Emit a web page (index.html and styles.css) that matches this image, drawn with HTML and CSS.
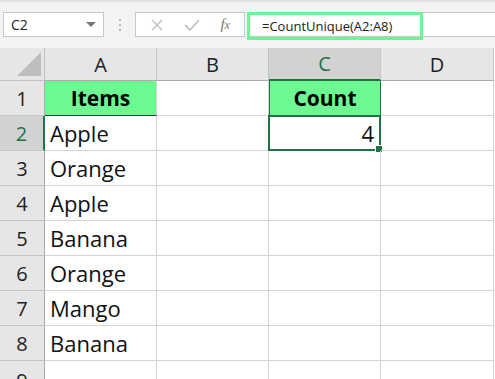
FILE: index.html
```html
<!DOCTYPE html>
<html lang="en">

<head>
    <meta charset="UTF-8">
    <title>CountUnique</title>
    <link rel="stylesheet" href="styles.css">
</head>

<body>
    <div class="toolbar">
        <div class="name-box">
            <span>C2</span>
            <svg class="caret" width="10" height="6" viewBox="0 0 10 6"><path d="M0 0 L10 0 L5 5 Z" fill="#777"/></svg>
        </div>
        <div class="dots"><i></i><i></i><i></i></div>
        <div class="fx-buttons">
            <svg width="14" height="14" viewBox="0 0 14 14"><path d="M2 2 L12 12 M12 2 L2 12" stroke="#c4c4c4" stroke-width="1.6"/></svg>
            <svg width="16" height="14" viewBox="0 0 16 14"><path d="M1 7 L6 12 L15 2" stroke="#c4c4c4" stroke-width="1.8" fill="none"/></svg>
            <span class="fx"><i>f</i><i>x</i></span>
        </div>
        <div class="formula">
            <span class="highlight">=CountUnique(A2:A8)</span>
        </div>
    </div>

    <div class="sheet">
        <div class="corner"><svg width="24" height="24" viewBox="0 0 24 24"><path d="M24 0 L24 24 L0 24 Z" fill="#bdbdbd"/></svg></div>
        <div class="col-head">A</div>
        <div class="col-head">B</div>
        <div class="col-head active">C</div>
        <div class="col-head">D</div>

        <div class="row-head">1</div>
        <div class="cell title a1">Items</div>
        <div class="cell"></div>
        <div class="cell title c1">Count</div>
        <div class="cell"></div>

        <div class="row-head active">2</div>
        <div class="cell">Apple</div>
        <div class="cell"></div>
        <div class="cell num selected">4<span class="handle"></span></div>
        <div class="cell"></div>

        <div class="row-head">3</div>
        <div class="cell">Orange</div>
        <div class="cell"></div>
        <div class="cell"></div>
        <div class="cell"></div>

        <div class="row-head">4</div>
        <div class="cell">Apple</div>
        <div class="cell"></div>
        <div class="cell"></div>
        <div class="cell"></div>

        <div class="row-head">5</div>
        <div class="cell">Banana</div>
        <div class="cell"></div>
        <div class="cell"></div>
        <div class="cell"></div>

        <div class="row-head">6</div>
        <div class="cell">Orange</div>
        <div class="cell"></div>
        <div class="cell"></div>
        <div class="cell"></div>

        <div class="row-head">7</div>
        <div class="cell">Mango</div>
        <div class="cell"></div>
        <div class="cell"></div>
        <div class="cell"></div>

        <div class="row-head">8</div>
        <div class="cell">Banana</div>
        <div class="cell"></div>
        <div class="cell"></div>
        <div class="cell"></div>

        <div class="row-head last">9</div>
        <div class="cell"></div>
        <div class="cell"></div>
        <div class="cell"></div>
        <div class="cell"></div>
    </div>
</body>

</html>
```

FILE: styles.css
```css
body {
    margin: 0;
    width: 495px;
    height: 379px;
    overflow: hidden;
    background-color: #fff;
    font-family: "Open Sans", Arial, sans-serif;
}

.toolbar {
    height: 48px;
    background-color: #f3f3f3;
    border-top: 2px solid #e2e2e2;
    display: flex;
    align-items: flex-start;
    padding-top: 10px;
    box-sizing: border-box;
}

.name-box {
    width: 101px;
    height: 25px;
    margin-left: 3px;
    background-color: #fff;
    border: 1px solid #c8c8c8;
    box-sizing: border-box;
    display: flex;
    align-items: center;
    justify-content: space-between;
    padding: 0 7px 0 7px;
    font-size: 14px;
    color: #222;
}

.dots {
    width: 31px;
    height: 25px;
    display: flex;
    flex-direction: column;
    align-items: center;
    justify-content: center;
    gap: 3px;
}

.dots i {
    width: 2px;
    height: 2px;
    background-color: #b8b8b8;
}

.fx-buttons {
    width: 110px;
    height: 25px;
    background-color: #fff;
    border: 1px solid #c8c8c8;
    box-sizing: border-box;
    display: flex;
    align-items: center;
    justify-content: space-around;
    padding: 0 4px 0 4px;
}

.fx {
    font-family: "Liberation Serif", serif;
    font-size: 15px;
    color: #777;
}

.fx i:last-child {
    font-size: 12px;
}

.formula {
    flex: 1;
    height: 25px;
    margin-left: 2px;
    background-color: #fff;
    border: 1px solid #c8c8c8;
    border-right: none;
    box-sizing: border-box;
    position: relative;
}

.highlight {
    position: absolute;
    left: -1px;
    top: -1px;
    width: 176px;
    height: 28px;
    border: 3px solid #6ef494;
    box-sizing: border-box;
    padding-left: 12px;
    font-size: 13px;
    line-height: 22px;
    color: #222;
}

.sheet {
    display: grid;
    grid-template-columns: 45px 112px 112px 112px 113px;
    grid-auto-rows: 35px;
    grid-template-rows: 33px;
}

.corner {
    background-color: #e6e6e6;
    border-right: 1px solid #c0c0c0;
    border-bottom: 1px solid #c0c0c0;
    display: flex;
    align-items: flex-end;
    justify-content: flex-end;
    padding: 0 3px 4px 0;
}

.col-head {
    background-color: #e6e6e6;
    border-right: 1px solid #c6c6c6;
    border-bottom: 1px solid #ababab;
    display: flex;
    align-items: center;
    justify-content: center;
    font-size: 20px;
    color: #222;
}

.col-head.active {
    background-color: #d2d2d2;
    color: #217346;
    border-bottom: 2px solid #217346;
}

.row-head {
    background-color: #e6e6e6;
    border-right: 1px solid #ababab;
    border-bottom: 1px solid #c6c6c6;
    display: flex;
    align-items: center;
    justify-content: center;
    font-size: 20px;
    color: #222;
}

.row-head.last {
    align-items: flex-start;
    padding-top: 6px;
}

.row-head.active {
    background-color: #d2d2d2;
    color: #217346;
    border-right: 2px solid #217346;
}

.cell {
    border-right: 1px solid #d4d4d4;
    border-bottom: 1px solid #d4d4d4;
    display: flex;
    align-items: center;
    padding: 0 5px;
    font-size: 22px;
    color: #111;
    position: relative;
}

.title {
    background-color: #6cf991;
    font-weight: bold;
    justify-content: center;
    font-size: 21px;
    color: #000;
}

.a1 {
    border-bottom: 1px solid #333;
}

.c1 {
    border: 1px solid #217346;
    border-top: none;
}

.num {
    justify-content: flex-end;
}

.selected {
    border: 2px solid #217346;
    margin: -1px 0 0 -1px;
}

.handle {
    position: absolute;
    right: -4px;
    bottom: -4px;
    width: 6px;
    height: 6px;
    background-color: #217346;
    border: 1px solid #fff;
}
```
